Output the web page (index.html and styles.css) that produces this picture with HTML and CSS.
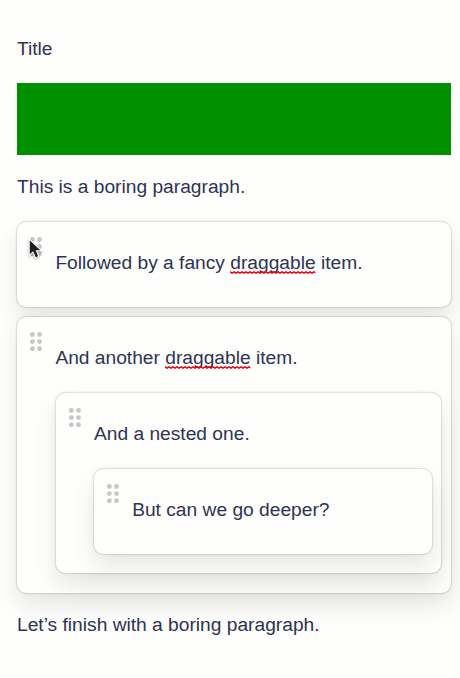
FILE: index.html
```html
<!DOCTYPE html>
<html lang="en">
<head>
<meta charset="utf-8">
<title>Draggable items</title>
<link rel="stylesheet" href="styles.css">
</head>
<body>
<svg class="defs" width="0" height="0" aria-hidden="true">
  <defs>
    <pattern id="wave" width="4" height="3" patternUnits="userSpaceOnUse">
      <path d="M-2 2.1 L0 .9 L2 2.1 L4 .9 L6 2.1" fill="none" stroke="#f00010" stroke-width="1.6"/>
    </pattern>
    <symbol id="grip" viewBox="0 0 12 20">
      <circle cx="2.4" cy="2.5" r="2.45"/><circle cx="9.5" cy="2.5" r="2.45"/>
      <circle cx="2.4" cy="9.6" r="2.45"/><circle cx="9.5" cy="9.6" r="2.45"/>
      <circle cx="2.4" cy="16.7" r="2.45"/><circle cx="9.5" cy="16.7" r="2.45"/>
    </symbol>
  </defs>
</svg>
<main class="editor">
  <p>Title</p>
  <div class="block"></div>
  <p>This is a boring paragraph.</p>
  <section class="item">
    <svg class="handle"><use href="#grip"/></svg>
    <svg class="cursor" viewBox="0 0 14 21"><path d="M1 1 L1 16.6 L4.6 13.4 L7 19 L10.2 17.6 L7.9 12.2 L13 12.2 Z" fill="#202020" stroke="#fff" stroke-width="1"/></svg>
    <div class="content">
      <p>Followed by a fancy <span class="misspelled">draggable<svg class="squiggle"><rect width="100%" height="3" fill="url(#wave)"/></svg></span> item.</p>
    </div>
  </section>
  <section class="item">
    <svg class="handle"><use href="#grip"/></svg>
    <div class="content">
      <p>And another <span class="misspelled">draggable<svg class="squiggle"><rect width="100%" height="3" fill="url(#wave)"/></svg></span> item.</p>
      <section class="item">
        <svg class="handle"><use href="#grip"/></svg>
        <div class="content">
          <p>And a nested one.</p>
          <section class="item">
            <svg class="handle"><use href="#grip"/></svg>
            <div class="content"><p>But can we go deeper?</p></div>
          </section>
        </div>
      </section>
    </div>
  </section>
  <p>Let’s finish with a boring paragraph.</p>
</main>
</body>
</html>
```
FILE: styles.css
```css
* { box-sizing: border-box; }
body {
  margin: 0;
  background: #fefefd;
  color: #2d3452;
  font: 19.2px/22px "Liberation Sans", Arial, sans-serif;
}
.defs { position: absolute; }
.editor { padding: 38px 9px 0 17px; }
p { margin: 0; white-space: nowrap; }
.block { height: 72px; margin: 23px 0 21px; background: #009000; }
.item {
  position: relative;
  display: flex;
  gap: 10.8px;
  margin-bottom: 10px;
  padding: 10px 9.6px 9.6px;
  border-radius: 9.6px;
  background: #fefefd;
  box-shadow: 0 0 0 1.2px rgba(0, 0, 0, .1), 0 12px 24px rgba(0, 0, 0, .1);
}
.item .item { margin: 0 0 10.4px .4px; }
.item .item .item { margin: 0 0 9.4px; }
.editor > p + .item { margin-top: 24px; }
.editor > .item + p { margin-top: 21px; }
.handle {
  flex: none;
  width: 12px;
  height: 20px;
  margin: 5px 2.6px 0 3.4px;
  fill: #c8c8c8;
}
.content { flex: 1; min-width: 0; }
.content > p { margin: 20px 0 24px; }
.content > p:last-child { margin-bottom: 23.4px; }
.item .item .content { margin-left: -.2px; }
.misspelled { position: relative; }
.squiggle {
  position: absolute;
  left: 0;
  top: 19px;
  width: 100%;
  height: 3px;
}
.cursor {
  position: absolute;
  left: 10.6px;
  top: 16px;
  width: 15px;
  height: 22px;
  filter: drop-shadow(0 1px 1px rgba(0, 0, 0, .3));
}
```
